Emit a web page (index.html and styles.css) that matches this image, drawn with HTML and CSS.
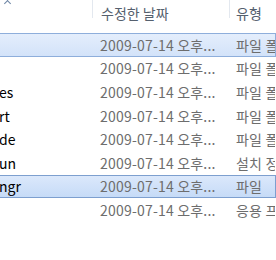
FILE: index.html
```html
<!doctype html>
<html>
<head>
<meta charset="utf-8">
<link rel="stylesheet" href="styles.css">
</head>
<body>
<div class="view">
    <div class="head">
        <div class="col name"><span class="sort"></span></div>
        <div class="col date">수정한 날짜</div>
        <div class="col type">유형</div>
    </div>
    <div class="rows">
        <div class="row sel"><div class="name"></div><div class="date">2009-07-14 오후...</div><div class="type">파일 폴더</div></div>
        <div class="row"><div class="name"></div><div class="date">2009-07-14 오후...</div><div class="type">파일 폴더</div></div>
        <div class="row"><div class="name"><span>es</span></div><div class="date">2009-07-14 오후...</div><div class="type">파일 폴더</div></div>
        <div class="row"><div class="name"><span>rt</span></div><div class="date">2009-07-14 오후...</div><div class="type">파일 폴더</div></div>
        <div class="row"><div class="name"><span>de</span></div><div class="date">2009-07-14 오후...</div><div class="type">파일 폴더</div></div>
        <div class="row"><div class="name"><span>un</span></div><div class="date">2009-07-14 오후...</div><div class="type">설치 정보</div></div>
        <div class="row sel focus"><div class="name"><span>ngr</span></div><div class="date">2009-07-14 오후...</div><div class="type">파일</div></div>
        <div class="row"><div class="name"></div><div class="date">2009-07-14 오후...</div><div class="type">응용 프로그램</div></div>
    </div>
</div>
</body>
</html>
```
FILE: styles.css
```css
html, body { margin: 0; padding: 0; background: #fff; }
body {
    font-family: "Noto Sans CJK KR", "Noto Sans", sans-serif;
    font-size: 14px;
    overflow: hidden;
}
.view { width: 276px; height: 260px; overflow: hidden; }

.head {
    display: grid;
    grid-template-columns: 92px 137px 1fr;
    height: 28px;
    color: #55606e;
}
.head .col {
    position: relative;
    padding-left: 8px;
    white-space: nowrap;
    overflow: hidden;
}
.head .col.type { padding-left: 6px; }
.head .date, .head .type {
    border-left: 1px solid #e3e8ef;
    height: 18px;
    line-height: 27px;
    overflow: visible;
}
.sort {
    position: absolute;
    left: 5px;
    top: 1px;
    width: 4px;
    height: 4px;
    border-left: 1px solid #6f87a6;
    border-top: 1px solid #6f87a6;
    transform: rotate(45deg);
}

.rows { margin-top: 5px; }
.row {
    display: grid;
    grid-template-columns: 92px 137px 1fr;
    height: 23.6px;
    align-items: center;
    white-space: nowrap;
    border: 1px solid transparent;
    border-left: 0;
    box-sizing: border-box;
    color: #6d6d6d;
    letter-spacing: 0.2px;
}
.row.sel {
    background: linear-gradient(#e4eefc, #d3e3f9);
    border-color: #8eaedb;
}
.row.focus {
    background: linear-gradient(#dbe8fb, #c6dbf7);
    border-color: #7d9fcf;
}
.row .name {
    color: #000;
    overflow: hidden;
    letter-spacing: 0;
}
.row .name span { display: block; margin-left: -1px; }
.row .date { padding-left: 8px; }
.row .type { padding-left: 7px; overflow: hidden; }
```
